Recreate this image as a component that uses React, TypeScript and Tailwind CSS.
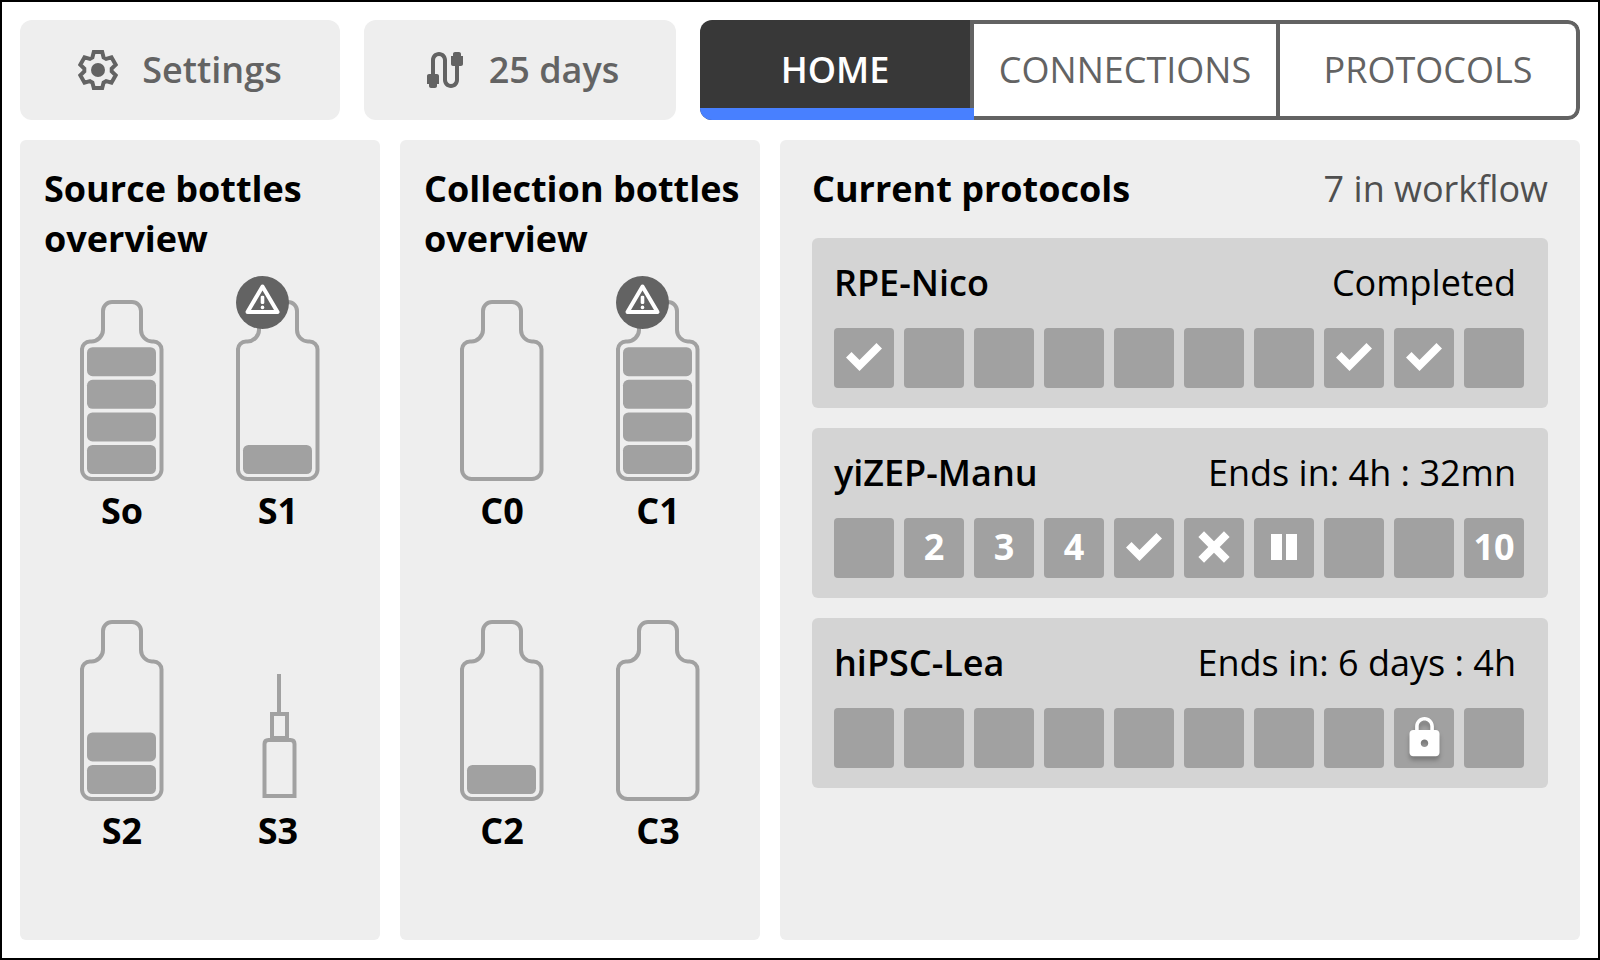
import { MdCable, MdLock } from "react-icons/md";

type StepState = "empty" | "done" | "failed" | "paused" | "locked" | number;

type Vessel = {
  label: string;
  kind: "bottle" | "syringe";
  level: number;
  warning?: boolean;
};

const sourceBottles: Vessel[] = [
  { label: "So", kind: "bottle", level: 4 },
  { label: "S1", kind: "bottle", level: 1, warning: true },
  { label: "S2", kind: "bottle", level: 2 },
  { label: "S3", kind: "syringe", level: 0 },
];

const collectionBottles: Vessel[] = [
  { label: "C0", kind: "bottle", level: 0 },
  { label: "C1", kind: "bottle", level: 4, warning: true },
  { label: "C2", kind: "bottle", level: 1 },
  { label: "C3", kind: "bottle", level: 0 },
];

const protocols: { name: string; status: string; steps: StepState[] }[] = [
  {
    name: "RPE-Nico",
    status: "Completed",
    steps: ["done", "empty", "empty", "empty", "empty", "empty", "empty", "done", "done", "empty"],
  },
  {
    name: "yiZEP-Manu",
    status: "Ends in: 4h : 32mn",
    steps: ["empty", 2, 3, 4, "done", "failed", "paused", "empty", "empty", 10],
  },
  {
    name: "hiPSC-Lea",
    status: "Ends in: 6 days : 4h",
    steps: ["empty", "empty", "empty", "empty", "empty", "empty", "empty", "empty", "locked", "empty"],
  },
];

// One tooth of the gear, repeated every 60 degrees around the centre
const tooth = [
  [-5.6, -12.6],
  [-4.2, -18],
  [4.2, -18],
  [5.6, -12.6],
];

const gearPoints = [0, 60, 120, 180, 240, 300]
  .flatMap((deg) => {
    const a = (deg * Math.PI) / 180;
    return tooth.map(
      ([x, y]) =>
        `${(x * Math.cos(a) - y * Math.sin(a)).toFixed(2)},${(x * Math.sin(a) + y * Math.cos(a)).toFixed(2)}`
    );
  })
  .join(" ");

function GearIcon() {
  return (
    <svg viewBox="-20 -20 40 40" className="w-10 h-10 shrink-0" aria-hidden="true">
      <polygon points={gearPoints} fill="none" stroke="currentColor" strokeWidth="4" />
      <circle r="7" fill="currentColor" />
    </svg>
  );
}

function WarningBadge() {
  return (
    <svg
      viewBox="0 0 54 54"
      className="absolute left-0 -top-6 w-[54px] h-[54px]"
      role="img"
      aria-label="Warning"
    >
      <circle cx="26.5" cy="26.5" r="26.5" fill="#636363" />
      <path d="M26.5 10.500 41.500 36H11.500Z" fill="none" stroke="#fff" strokeWidth="4" strokeLinejoin="round" />
      <rect x="24.7" y="19.7" width="3.6" height="8.4" rx="1.4" fill="#fff" />
      <circle cx="26.5" cy="31.4" r="1.8" fill="#fff" />
    </svg>
  );
}

function Bottle({ level }: { level: number }) {
  return (
    <svg viewBox="0 0 84 182" className="w-[84px] h-[182px]" aria-hidden="true">
      <path
        d="M32 2H52A9 9 0 0 1 61 11V30C61 36 66 41.500 72 41.500H73A8 8 0 0 1 81.500 50V170A9.500 9.500 0 0 1 72 179H11.500A9.500 9.500 0 0 1 2 170V50A8 8 0 0 1 10.500 41.500H11.500C17.500 41.500 23 36 23 30V11A9 9 0 0 1 32 2Z"
        fill="none"
        stroke="#a1a1a1"
        strokeWidth="4"
      />
      {Array.from({ length: level }, (_, i) => (
        <rect key={i} x="7" y={145 - i * 32.6} width="69" height="29" rx="5.5" fill="#a1a1a1" />
      ))}
    </svg>
  );
}

function Syringe() {
  return (
    <svg viewBox="0 0 84 182" className="w-[84px] h-[182px]" aria-hidden="true">
      <g fill="none" stroke="#a1a1a1" strokeWidth="4">
        <path d="M43 54V93" />
        <path d="M36 94H51V118H36Z" />
        <path d="M28.500 176V124Q28.500 120 32.500 120H54.500Q58.500 120 58.500 124V176Z" />
      </g>
    </svg>
  );
}

function CheckMark() {
  return (
    <svg viewBox="0 0 36 28" className="w-9 h-7" role="img" aria-label="Done">
      <path d="M0 14.500 5.500 9 13.500 17 30.500 0 36 5.500 13.500 28Z" fill="#fff" />
    </svg>
  );
}

function CrossMark() {
  return (
    <svg viewBox="0 0 32 32" className="w-8 h-8" role="img" aria-label="Failed">
      <path d="M3.200 3.200 28.800 28.800M28.800 3.200 3.200 28.800" stroke="#fff" strokeWidth="8" />
    </svg>
  );
}

function PauseMark() {
  return (
    <svg viewBox="0 0 26 26" className="w-[26px] h-[26px]" role="img" aria-label="Paused">
      <path d="M0 0H11V26H0ZM15 0H26V26H15Z" fill="#fff" />
    </svg>
  );
}

function Step({ state }: { state: StepState }) {
  return (
    <li className="flex-1 aspect-square flex items-center justify-center pb-0.5 rounded bg-[#a1a1a1] text-white font-bold">
      {state === "done" && <CheckMark />}
      {state === "failed" && <CrossMark />}
      {state === "paused" && <PauseMark />}
      {state === "locked" && (
        <MdLock size={45} className="drop-shadow-[0_4px_2px_rgba(0,0,0,0.25)]" aria-label="Locked" />
      )}
      {typeof state === "number" && state}
    </li>
  );
}

function BottlePanel({ title, vessels }: { title: string; vessels: Vessel[] }) {
  return (
    <section className="rounded-md bg-[#eeeeee] py-6">
      <h2 className="pl-6 pr-4 font-bold">{title}</h2>
      <div className="mt-9 grid grid-cols-[84px_84px] justify-center gap-x-[72px] gap-y-[84px]">
        {vessels.map((v) => (
          <div key={v.label} className="relative flex flex-col items-center gap-1">
            {v.kind === "bottle" ? <Bottle level={v.level} /> : <Syringe />}
            {v.warning && <WarningBadge />}
            <span className="font-bold">{v.label}</span>
          </div>
        ))}
      </div>
    </section>
  );
}

export default function App() {
  return (
    <div className="min-h-screen flex flex-col gap-5 border-2 border-black bg-white p-[18px] font-['Open_Sans','Noto_Sans',sans-serif] text-[36px] leading-[50px] text-black">
      {/* Top bar */}
      <header className="grid grid-cols-[320fr_312fr_880fr] gap-6 h-[100px]">
        <button className="flex items-center justify-center gap-6 rounded-xl bg-[#eeeeee] text-[#636363] font-semibold">
          <GearIcon />
          Settings
        </button>
        <button className="flex items-center justify-center gap-5 rounded-xl bg-[#eeeeee] text-[#636363] font-semibold">
          <MdCable size={48} />
          25 days
        </button>
        <nav className="grid grid-cols-[274fr_306fr_300fr] rounded-xl overflow-hidden text-[#636363]">
          <button className="relative border-r-4 border-[#636363] bg-[#383838] text-white font-semibold">
            HOME
            <span className="absolute left-0 -right-1 bottom-0 h-3 bg-[#4880ff]" />
          </button>
          <button className="border-y-4 border-r-4 border-[#636363]">CONNECTIONS</button>
          <button className="border-y-4 border-r-4 border-[#636363] rounded-r-xl">PROTOCOLS</button>
        </nav>
      </header>

      {/* Panels */}
      <main className="flex-1 grid grid-cols-[360fr_360fr_800fr] gap-5">
        <BottlePanel title="Source bottles overview" vessels={sourceBottles} />
        <BottlePanel title="Collection bottles overview" vessels={collectionBottles} />

        <section className="rounded-md bg-[#eeeeee] px-8 py-6">
          <div className="flex justify-between">
            <h2 className="font-bold">Current protocols</h2>
            <p className="text-[#4f4f4f]">7 in workflow</p>
          </div>
          <div className="mt-6 flex flex-col gap-5">
            {protocols.map((p) => (
              <article key={p.name} className="rounded-md bg-[#d4d4d4] pl-[22px] pr-6 py-5">
                <div className="flex justify-between pr-2">
                  <h3 className="font-semibold">{p.name}</h3>
                  <p>{p.status}</p>
                </div>
                <ol className="mt-5 flex gap-[10px]">
                  {p.steps.map((s, i) => (
                    <Step key={i} state={s} />
                  ))}
                </ol>
              </article>
            ))}
          </div>
        </section>
      </main>
    </div>
  );
}
